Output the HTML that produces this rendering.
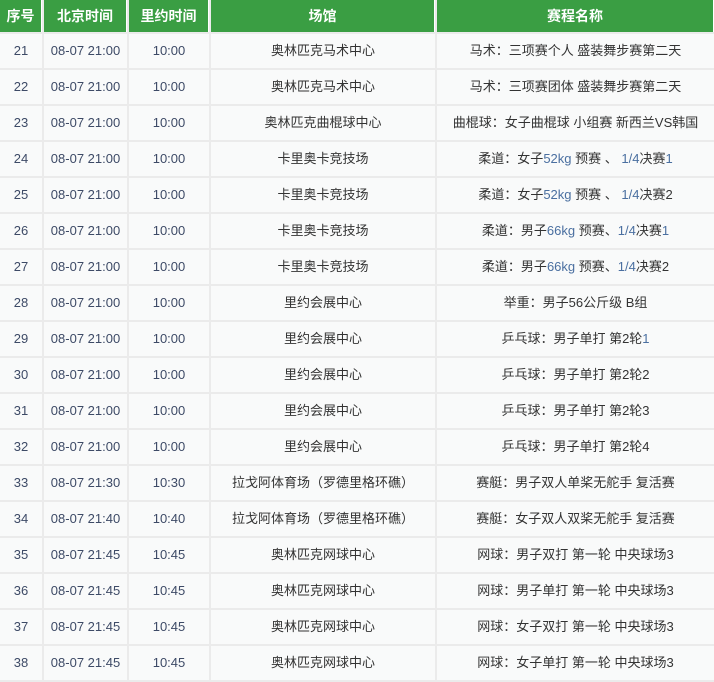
<!DOCTYPE html>
<html><head><meta charset="utf-8"><style>
html,body{margin:0;padding:0;width:714px;height:682px;overflow:hidden;background:#ebebeb}
table{position:absolute;left:-2px;top:-2px;border-collapse:separate;border-spacing:2px;width:718px;table-layout:fixed;font-family:"Liberation Sans","Noto Sans CJK SC",sans-serif;font-size:13px;color:#333}
th{background:#3a9e43;color:#fff;height:32px;padding:0;font-size:14px;font-weight:bold;border-right:1px solid #fff;line-height:16px}
td{background:#f9fafa;height:34px;padding:0;text-align:center;white-space:nowrap;line-height:16px}
td.n{color:#3d4a66}
.b{color:#4a6fa0}
</style></head><body>
<table>
<colgroup><col style="width:42px"><col style="width:83px"><col style="width:80px"><col style="width:224px"><col style="width:277px"></colgroup>
<tr><th>序号</th><th>北京时间</th><th>里约时间</th><th>场馆</th><th>赛程名称</th></tr>
<tr><td class="n">21</td><td class="n">08-07 21:00</td><td class="n">10:00</td><td>奥林匹克马术中心</td><td>马术：三项赛个人 盛装舞步赛第二天</td></tr>
<tr><td class="n">22</td><td class="n">08-07 21:00</td><td class="n">10:00</td><td>奥林匹克马术中心</td><td>马术：三项赛团体 盛装舞步赛第二天</td></tr>
<tr><td class="n">23</td><td class="n">08-07 21:00</td><td class="n">10:00</td><td>奥林匹克曲棍球中心</td><td>曲棍球：女子曲棍球 小组赛 新西兰VS韩国</td></tr>
<tr><td class="n">24</td><td class="n">08-07 21:00</td><td class="n">10:00</td><td>卡里奥卡竞技场</td><td>柔道：女子<span class="b">52kg</span> 预赛 、 <span class="b">1/4</span>决赛<span class="b">1</span></td></tr>
<tr><td class="n">25</td><td class="n">08-07 21:00</td><td class="n">10:00</td><td>卡里奥卡竞技场</td><td>柔道：女子<span class="b">52kg</span> 预赛 、 <span class="b">1/4</span>决赛2</td></tr>
<tr><td class="n">26</td><td class="n">08-07 21:00</td><td class="n">10:00</td><td>卡里奥卡竞技场</td><td>柔道：男子<span class="b">66kg</span> 预赛、<span class="b">1/4</span>决赛<span class="b">1</span></td></tr>
<tr><td class="n">27</td><td class="n">08-07 21:00</td><td class="n">10:00</td><td>卡里奥卡竞技场</td><td>柔道：男子<span class="b">66kg</span> 预赛、<span class="b">1/4</span>决赛2</td></tr>
<tr><td class="n">28</td><td class="n">08-07 21:00</td><td class="n">10:00</td><td>里约会展中心</td><td>举重：男子56公斤级 B组</td></tr>
<tr><td class="n">29</td><td class="n">08-07 21:00</td><td class="n">10:00</td><td>里约会展中心</td><td>乒乓球：男子单打 第2轮<span class="b">1</span></td></tr>
<tr><td class="n">30</td><td class="n">08-07 21:00</td><td class="n">10:00</td><td>里约会展中心</td><td>乒乓球：男子单打 第2轮2</td></tr>
<tr><td class="n">31</td><td class="n">08-07 21:00</td><td class="n">10:00</td><td>里约会展中心</td><td>乒乓球：男子单打 第2轮3</td></tr>
<tr><td class="n">32</td><td class="n">08-07 21:00</td><td class="n">10:00</td><td>里约会展中心</td><td>乒乓球：男子单打 第2轮4</td></tr>
<tr><td class="n">33</td><td class="n">08-07 21:30</td><td class="n">10:30</td><td>拉戈阿体育场（罗德里格环礁）</td><td>赛艇：男子双人单桨无舵手 复活赛</td></tr>
<tr><td class="n">34</td><td class="n">08-07 21:40</td><td class="n">10:40</td><td>拉戈阿体育场（罗德里格环礁）</td><td>赛艇：女子双人双桨无舵手 复活赛</td></tr>
<tr><td class="n">35</td><td class="n">08-07 21:45</td><td class="n">10:45</td><td>奥林匹克网球中心</td><td>网球：男子双打 第一轮 中央球场3</td></tr>
<tr><td class="n">36</td><td class="n">08-07 21:45</td><td class="n">10:45</td><td>奥林匹克网球中心</td><td>网球：男子单打 第一轮 中央球场3</td></tr>
<tr><td class="n">37</td><td class="n">08-07 21:45</td><td class="n">10:45</td><td>奥林匹克网球中心</td><td>网球：女子双打 第一轮 中央球场3</td></tr>
<tr><td class="n">38</td><td class="n">08-07 21:45</td><td class="n">10:45</td><td>奥林匹克网球中心</td><td>网球：女子单打 第一轮 中央球场3</td></tr>
</table>
</body></html>
